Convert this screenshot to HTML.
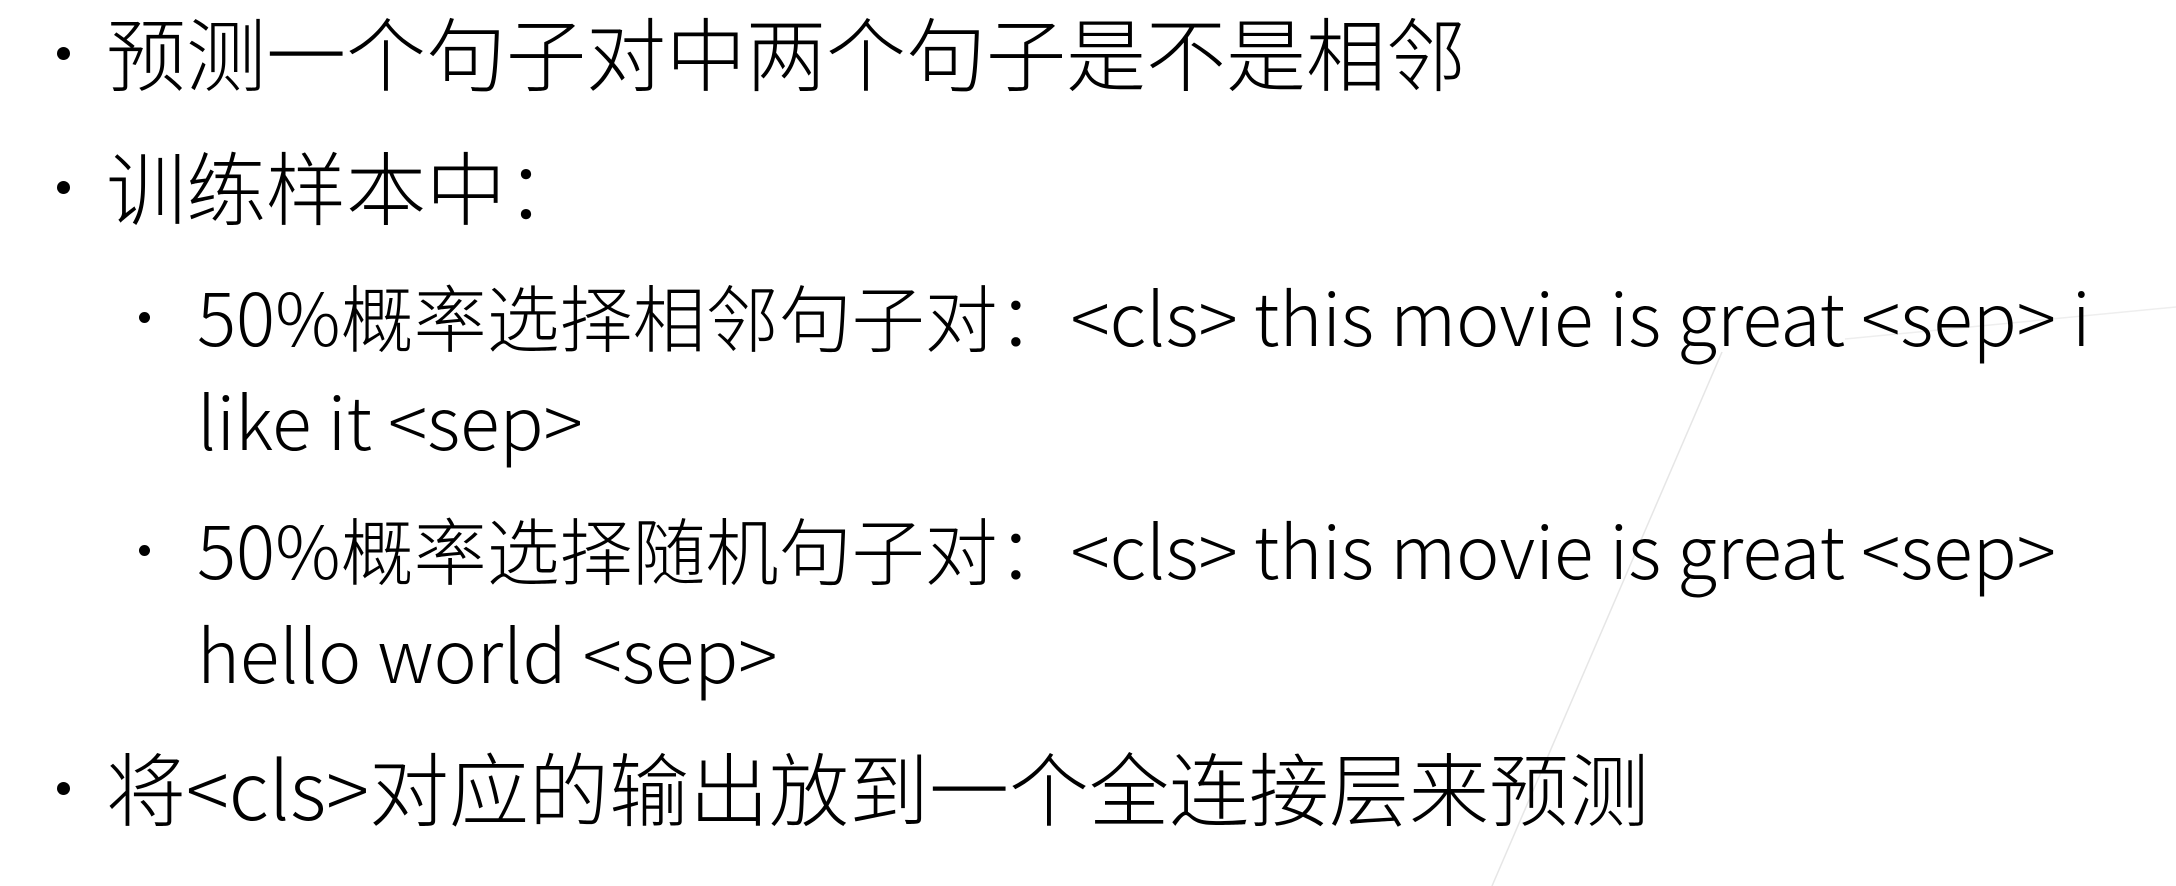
<!DOCTYPE html>
<html><head><meta charset="utf-8"><style>
html,body{margin:0;padding:0;background:#fff;}
body{width:2176px;height:886px;position:relative;overflow:hidden;font-family:"Noto Sans CJK SC","Liberation Sans",sans-serif;font-weight:300;color:#000;}
.l{position:absolute;white-space:nowrap;line-height:1;}
.b{position:absolute;width:13px;height:13px;border-radius:50%;background:#000;}
.s{position:absolute;width:11px;height:11px;border-radius:50%;background:#000;}
.m{font-size:80px;left:106px;}
.t{font-size:73px;left:197px;}
</style></head><body>
<svg width="2176" height="886" style="position:absolute;left:0;top:0">
<line x1="1722" y1="352" x2="1492" y2="886" stroke="#e6e6e6" stroke-width="1.5"/>
<line x1="1845" y1="339" x2="2176" y2="307" stroke="#eeeeee" stroke-width="1.5"/>
</svg>
<div class="b" style="left:57px;top:47px"></div>
<div class="l m" style="top:11px">预测一个句子对中两个句子是不是相邻</div>
<div class="b" style="left:57px;top:181px"></div>
<div class="l m" style="top:145px">训练样本中：</div>
<div class="s" style="left:139px;top:312px"></div>
<div class="l t" style="top:279px">50%概率选择相邻句子对：&lt;cls&gt; this movie is great &lt;sep&gt; i</div>
<div class="l t" style="top:383px">like it &lt;sep&gt;</div>
<div class="s" style="left:139px;top:545px"></div>
<div class="l t" style="top:512px">50%概率选择随机句子对：&lt;cls&gt; this movie is great &lt;sep&gt;</div>
<div class="l t" style="top:616px">hello world &lt;sep&gt;</div>
<div class="b" style="left:57px;top:782px"></div>
<div class="l m" style="top:746px">将&lt;cls&gt;对应的输出放到一个全连接层来预测</div>
</body></html>
